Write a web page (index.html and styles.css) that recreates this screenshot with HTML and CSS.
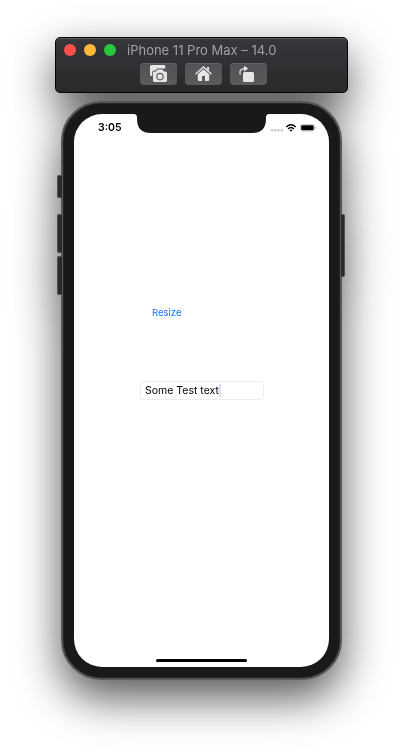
FILE: index.html
```html
<!DOCTYPE html>
<html lang="en">
<head>
<meta charset="utf-8">
<title>Simulator</title>
<link rel="stylesheet" href="styles.css">
</head>
<body>
<main class="simulator">
  <header class="window">
    <div class="titlebar">
      <span class="light close"></span><span class="light minimize"></span><span class="light expand"></span>
      <h1 class="title">iPhone 11 Pro Max – 14.0</h1>
    </div>
    <div class="tools">
      <button class="tool" aria-label="Screenshot">
        <svg width="37" height="22" viewBox="0 0 37 22">
          <path fill="#e6e6e7" d="M11.5 2h12.5a1.3 1.3 0 0 1 1.3 1.3V5.600H17L15.500 7.500H13.800Q12.200 7.800 12.200 9.500V13H11.500Q10 12.800 10 11.200V3.500Q10 2 11.500 2Z"/>
          <path fill="#e6e6e7" d="M17.500 6.500h5l1.500 2h1.500q1.500 0 1.500 1.500v7.500q0 1.500-1.500 1.500h-11q-1.500 0-1.500-1.500V10q0-1.500 1.500-1.500H16Z"/>
          <circle cx="20" cy="13.600" r="3.200" fill="none" stroke="#606163" stroke-width="1.200"/>
        </svg>
      </button>
      <button class="tool" aria-label="Home">
        <svg width="37" height="22" viewBox="0 0 37 22">
          <path fill="none" stroke="#e6e6e7" stroke-width="1.400" stroke-linecap="round" d="M11 10.700 18.500 4 26 10.700"/>
          <path fill="#e6e6e7" d="M22 4h2v4l-2-1.800Z"/>
          <path fill="#e6e6e7" d="m18.500 6.300 5.700 5v5.500q0 1.200-1.200 1.200h-3v-5h-3v5h-3q-1.200 0-1.200-1.200v-5.500Z"/>
        </svg>
      </button>
      <button class="tool" aria-label="Rotate">
        <svg width="37" height="22" viewBox="0 0 37 22">
          <rect x="13" y="9" width="11" height="10" rx="1.500" fill="#e6e6e7"/>
          <path fill="none" stroke="#e6e6e7" stroke-width="1.300" d="M10.300 11.500C9 8.500 10.500 5.600 14.500 5.600"/>
          <path fill="#e6e6e7" d="m14 2.700 4.300 2.900-4.300 2.900Z"/>
        </svg>
      </button>
    </div>
  </header>
  <section class="phone">
    <i class="side mute"></i><i class="side volume-up"></i><i class="side volume-down"></i><i class="side power"></i>
    <div class="screen">
      <svg class="notch" width="135" height="20" viewBox="0 0 135 20"><path fill="#191919" d="M0 0Q3 0 3 3.500V5Q3 19 17 19H118Q132 19 132 5V3.500Q132 0 135 0Z"/></svg>
      <div class="status">
        <span class="time">3:05</span>
        <svg width="47" height="10" viewBox="0 0 47 10">
          <g fill="#c4c4c6"><circle cx="2" cy="7.200" r="1.200"/><circle cx="5.300" cy="7.200" r="1.200"/><circle cx="8.600" cy="7.200" r="1.200"/><circle cx="11.900" cy="7.200" r="1.200"/></g>
          <g fill="none" stroke="#000" stroke-width="1.400"><path d="M16.300 4Q21 -.4 25.700 4"/><path d="M18.100 6Q21 3.200 23.900 6"/></g>
          <path d="M19.500 7.100q1.500-1.200 3 0L21 8.700Z"/>
          <rect x="30.400" y="1.400" width="14" height="6.700" rx="2" fill="#fff" stroke="#bbb" stroke-width=".8"/>
          <rect x="31.200" y="2.200" width="12.400" height="5.100" rx="1"/>
          <path fill="#999" d="M45.400 3.500q1 .3 1 1.200t-1 1.200Z"/>
        </svg>
      </div>
      <div class="resize">Resize</div>
      <div class="field"><span>Some Test text</span><i class="caret"></i></div>
      <div class="home-bar"></div>
    </div>
  </section>
</main>
</body>
</html>
```
FILE: styles.css
```css
* { box-sizing: border-box; }
body {
  margin: 0;
  height: 753px;
  overflow: hidden;
  background: #fff;
  font-family: Inter, sans-serif;
}
.simulator {
  display: flex;
  flex-direction: column;
  gap: 8px;
  padding: 37px 55px 0;
  height: 753px;
  filter: drop-shadow(0 18px 22px rgba(0, 0, 0, .66));
}
.window {
  height: 56px;
  border: 1px solid #050505;
  border-radius: 5px;
  background: linear-gradient(#36373a, #28292b);
  box-shadow: inset 0 1px 0 #5b5c5f;
}
.titlebar {
  display: flex;
  align-items: center;
  gap: 8px;
  height: 23px;
  padding-left: 8px;
}
.light { width: 12px; height: 12px; border-radius: 50%; }
.close { background: #ff5049; }
.minimize { background: #ffb837; }
.expand { background: #29c83e; }
.title {
  margin: 0 0 0 3px;
  font-size: 13px;
  font-weight: 400;
  line-height: 16px;
  white-space: nowrap;
  color: #a0a1a3;
}
.tools { display: flex; gap: 8px; padding: 2px 0 0 84px; }
.tool {
  width: 37px;
  height: 22px;
  padding: 0;
  border: 0;
  border-radius: 4px;
  background: linear-gradient(#515255, #5a5b5d);
  box-shadow: inset 0 1px 0 #636466;
}
.tool svg, .status svg { display: block; }
.phone {
  position: relative;
  width: 281px;
  height: 579px;
  margin-left: 6px;
  padding: 11px;
  border: 2px solid #555657;
  border-radius: 40px;
  background: #191919;
  box-shadow: inset 0 0 0 .5px #303030;
}
.side {
  position: absolute;
  left: -6px;
  width: 5px;
  border: 1px solid #505152;
  border-right: 0;
  border-radius: 2px 0 0 2px;
  background: #292a2b;
}
.mute { top: 72px; height: 23px; }
.volume-up { top: 111px; height: 39px; }
.volume-down { top: 153px; height: 39px; }
.power {
  top: 111px;
  left: auto;
  right: -5px;
  width: 4px;
  height: 63px;
  border-left: 0;
  border-right: 1px solid #505152;
  border-radius: 0 2px 2px 0;
}
.screen {
  position: relative;
  display: flex;
  flex-direction: column;
  height: 553px;
  overflow: hidden;
  border-radius: 28px;
  background: #fff;
}
.notch { position: absolute; top: 0; left: 60px; }
.status {
  display: flex;
  justify-content: space-between;
  align-items: center;
  height: 28px;
  padding: 0 12px 0 24px;
}
.time { font-size: 10.5px; font-weight: 600; line-height: 14px; }
.resize {
  margin: 164px 0 0 78px;
  font-size: 9.5px;
  line-height: 14px;
  color: #1479fb;
}
.field {
  display: flex;
  align-items: center;
  width: 124px;
  height: 19px;
  margin: 61px 0 0 66px;
  padding-left: 4px;
  border: 1px solid #ededed;
  border-radius: 3px;
  font-size: 10.5px;
  white-space: nowrap;
}
.caret { width: 2px; height: 13px; background: #dbe1fb; }
.home-bar {
  width: 91px;
  height: 3px;
  margin: auto auto 5px 82px;
  border-radius: 2px;
  background: #000;
}
```
